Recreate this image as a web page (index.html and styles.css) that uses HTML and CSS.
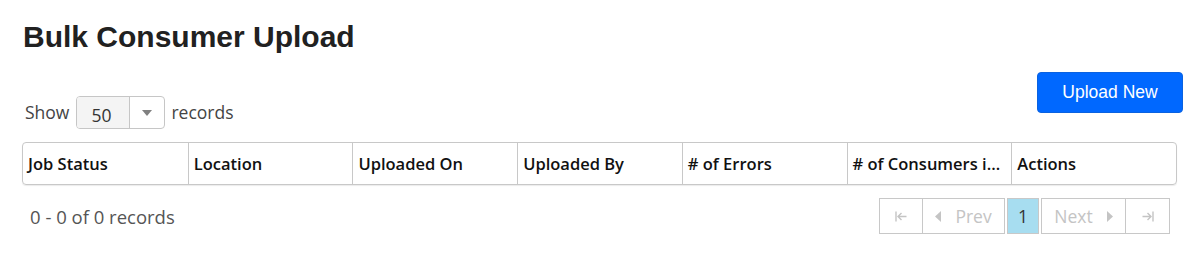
FILE: index.html
```html
<!DOCTYPE html>
<html>
<head>
	<meta charset="utf-8">
	<title>Bulk Consumer Upload</title>
	<link rel="stylesheet" href="styles.css">
</head>
<body>
	<div class="page">
		<h1 class="title">Bulk Consumer Upload</h1>

		<div class="toolbar">
			<div class="pager-size">
				<span class="label">Show</span>
				<div class="select">
					<span class="select-value">50</span>
					<span class="select-arrow">
						<svg width="10" height="6" viewBox="0 0 10 6"><path d="M0 0h10L5 6z" fill="#808080"/></svg>
					</span>
				</div>
				<span class="label">records</span>
			</div>
			<button class="upload">Upload New</button>
		</div>

		<div class="grid">
			<div class="grid-head">
				<div class="cell">Job Status</div>
				<div class="cell">Location</div>
				<div class="cell">Uploaded On</div>
				<div class="cell">Uploaded By</div>
				<div class="cell"># of Errors</div>
				<div class="cell"># of Consumers in File</div>
				<div class="cell">Actions</div>
			</div>
		</div>

		<div class="footer">
			<div class="info">0 - 0 of 0 records</div>
			<div class="pager">
				<span class="pg pg-first">
					<svg width="12" height="11" viewBox="0 0 12 11"><path d="M1 0.5v10M11.5 5.5H3M6.5 2L3 5.5 6.5 9" stroke="#c4c4c4" stroke-width="1.4" fill="none"/></svg>
				</span>
				<span class="pg pg-prev">
					<svg width="6" height="11" viewBox="0 0 6 11"><path d="M6 0v11L0 5.5z" fill="#c4c4c4"/></svg>
					<span>Prev</span>
				</span>
				<span class="pg pg-num">1</span>
				<span class="pg pg-next">
					<span>Next</span>
					<svg width="6" height="11" viewBox="0 0 6 11"><path d="M0 0v11L6 5.5z" fill="#c4c4c4"/></svg>
				</span>
				<span class="pg pg-last">
					<svg width="12" height="11" viewBox="0 0 12 11"><path d="M11 0.5v10M0.5 5.5H9M5.5 2L9 5.5 5.5 9" stroke="#c4c4c4" stroke-width="1.4" fill="none"/></svg>
				</span>
			</div>
		</div>
	</div>
</body>
</html>
```

FILE: styles.css
```css
*{
	padding: 0;
	margin: 0;
	box-sizing: border-box;
}
body{
	background: #fff;
	font-family: "Open Sans", "Noto Sans", sans-serif;
	color: #333;
}
.page{
	padding: 19px 19px 0 22px;
}
.title{
	font-family: "Liberation Sans", Arial, sans-serif;
	font-size: 30px;
	font-weight: bold;
	color: #212121;
	line-height: 36px;
	padding-left: 1px;
}
.toolbar{
	display: flex;
	justify-content: space-between;
	align-items: flex-start;
	margin-top: 17px;
}
.pager-size{
	display: flex;
	align-items: center;
	margin-top: 24px;
	padding-left: 3px;
	font-size: 17.5px;
	color: #444;
}
.label{
	line-height: 33px;
}
.select{
	display: flex;
	height: 33px;
	margin: 0 6px 0 7px;
	border: 1px solid #c6c6c6;
	border-radius: 4px;
	overflow: hidden;
}
.select-value{
	width: 53px;
	padding-left: 14px;
	padding-top: 3px;
	line-height: 30px;
	background: #f4f4f4;
	color: #333;
	border-right: 1px solid #c6c6c6;
}
.select-arrow{
	width: 34px;
	display: flex;
	align-items: center;
	justify-content: center;
}
.upload{
	width: 146px;
	height: 41px;
	border: 1px solid #0a62e0;
	border-radius: 4px;
	background: #0068ff;
	color: #fff;
	font-family: "Liberation Sans", Arial, sans-serif;
	font-size: 17.5px;
	outline: none;
}
.grid{
	width: 1155px;
	margin-top: 13px;
	border: 1px solid #c8c8c8;
	border-radius: 4px;
	box-shadow: 0 1px 1px rgba(0,0,0,0.08);
}
.grid-head{
	display: grid;
	grid-template-columns: repeat(7, 1fr);
	height: 41px;
}
.cell{
	padding: 0 5px;
	line-height: 41px;
	font-size: 16.5px;
	font-weight: 600;
	color: #111;
	white-space: nowrap;
	overflow: hidden;
	text-overflow: ellipsis;
	border-left: 1px solid #c8c8c8;
}
.cell:first-child{
	border-left: 0;
}
.footer{
	width: 1155px;
	display: flex;
	justify-content: space-between;
	align-items: center;
	margin-top: 13px;
	padding-right: 7px;
}
.info{
	padding-left: 8px;
	font-size: 18.5px;
	color: #555;
}
.pager{
	display: flex;
	height: 36px;
}
.pg{
	display: flex;
	align-items: center;
	justify-content: center;
	height: 36px;
	border: 1px solid #c8c8c8;
	font-size: 17.5px;
	color: #c4c4c4;
	gap: 14px;
}
.pg-first{
	width: 44px;
}
.pg-prev{
	width: 82px;
	border-left: 0;
	margin-right: 2px;
}
.pg-num{
	width: 32px;
	background: #a7ddf0;
	color: #333;
	margin-right: 2px;
}
.pg-next{
	width: 85px;
}
.pg-last{
	width: 44px;
	border-left: 0;
}
```
